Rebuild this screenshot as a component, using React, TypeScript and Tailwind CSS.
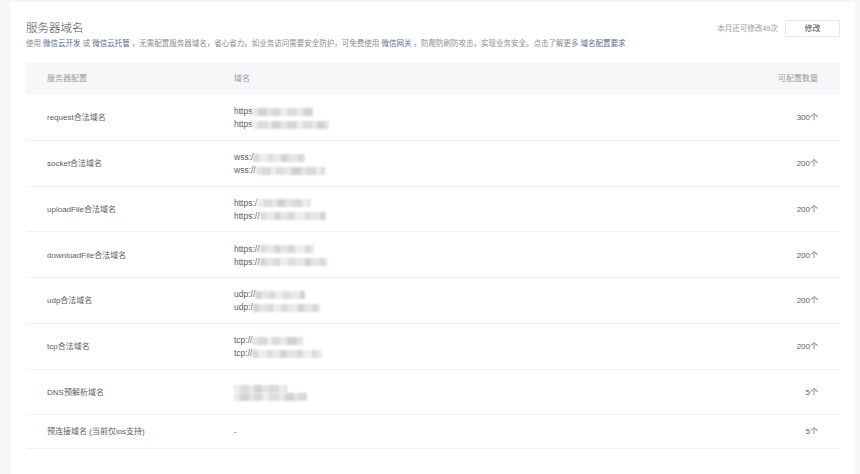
import React from "react";

type Blk = [number, string];

const Blur = ({ w }: { w: number }) => {
  const segs: Blk[] = [];
  const pal = ["#dcdcdc", "#e8e8e8", "#d2d2d2", "#e4e4e4", "#d8d8d8", "#ededed"];
  let rest = w;
  let i = 0;
  while (rest > 0) {
    const s = Math.min(rest, [6, 9, 5, 8, 7, 10][i % 6]);
    segs.push([s, pal[(i * 7 + w) % pal.length]]);
    rest -= s;
    i++;
  }
  return (
    <span className="inline-flex h-[8px] blur-[1.2px] align-middle">
      {segs.map(([s, c], k) => (
        <span key={k} className="h-full" style={{ width: s, background: c }} />
      ))}
    </span>
  );
};

type Line = { p: string; w: number };
type Row = { name: string; lines: Line[]; count: string };

const rows: Row[] = [
  { name: "request合法域名", lines: [{ p: "https", w: 61 }, { p: "https", w: 77 }], count: "300个" },
  { name: "socket合法域名", lines: [{ p: "wss:/", w: 52 }, { p: "wss://", w: 69 }], count: "200个" },
  { name: "uploadFile合法域名", lines: [{ p: "https:/", w: 53 }, { p: "https://", w: 66 }], count: "200个" },
  { name: "downloadFile合法域名", lines: [{ p: "https://", w: 54 }, { p: "https://", w: 68 }], count: "200个" },
  { name: "udp合法域名", lines: [{ p: "udp://", w: 50 }, { p: "udp:/", w: 68 }], count: "200个" },
  { name: "tcp合法域名", lines: [{ p: "tcp://", w: 51 }, { p: "tcp://", w: 70 }], count: "200个" },
  { name: "DNS预解析域名", lines: [{ p: "", w: 53 }, { p: "", w: 73 }], count: "5个" },
];

export default function App() {
  const font = { fontFamily: '"Liberation Sans", "Noto Sans CJK SC", sans-serif' };
  return (
    <div className="w-[860px] h-[474px] overflow-hidden bg-[#f5f6f8] pl-[10px] pr-[5px] pt-[2px]" style={font}>
      <div className="bg-white h-full pl-[16px] pr-[15px] pt-[17px]">
        <div className="flex items-start justify-between">
          <div>
            <div className="text-[11.5px] leading-[18px] text-[#4a4a4a] font-light">服务器域名</div>
            <div className="mt-[1px] text-[7.5px] leading-[12px] text-[#8a8a8a] whitespace-nowrap">
              使用 <span className="text-[#576b95]">微信云开发</span> 或 <span className="text-[#576b95]">微信云托管</span> ，无需配置服务器域名，省心省力。如业务访问需要安全防护，可免费使用 <span className="text-[#576b95]">微信网关</span> ，防爬防刷防攻击，实现业务安全。点击了解更多 <span className="text-[#576b95]">域名配置要求</span>
            </div>
          </div>
          <div className="flex items-center gap-[7px] pt-[1px]">
            <span className="text-[7.5px] text-[#9a9a9a]">本月还可修改49次</span>
            <button className="w-[55px] h-[17px] border border-[#e8e8e8] rounded-[2px] bg-white text-[8px] text-[#4a4a4a]">修改</button>
          </div>
        </div>

        <div className="mt-[13px] text-[8px] text-[#5c5c5c]">
          <div className="flex items-center h-[32px] bg-[#f6f7f9] text-[#9a9a9a]">
            <div className="w-[208px] pl-[21px]">服务器配置</div>
            <div className="flex-1">域名</div>
            <div className="pr-[22px]">可配置数量</div>
          </div>
          {rows.map((r) => (
            <div key={r.name} className="flex items-center h-[45.75px] border-b border-[#f2f2f2] pt-[2px]">
              <div className="w-[208px] pl-[21px]">{r.name}</div>
              <div className="flex-1 flex flex-col text-[8.5px] leading-[13px]">
                {r.lines.map((l, k) => (
                  <div key={k} className="flex items-center">
                    {l.p && <span>{l.p}</span>}
                    <Blur w={l.w} />
                  </div>
                ))}
              </div>
              <div className="pr-[22px]">{r.count}</div>
            </div>
          ))}
          <div className="flex items-center h-[33.5px] border-b border-[#f2f2f2] pt-[1px]">
            <div className="w-[208px] pl-[21px]">预连接域名 (当前仅ios支持)</div>
            <div className="flex-1">-</div>
            <div className="pr-[22px]">5个</div>
          </div>
        </div>
      </div>
    </div>
  );
}
